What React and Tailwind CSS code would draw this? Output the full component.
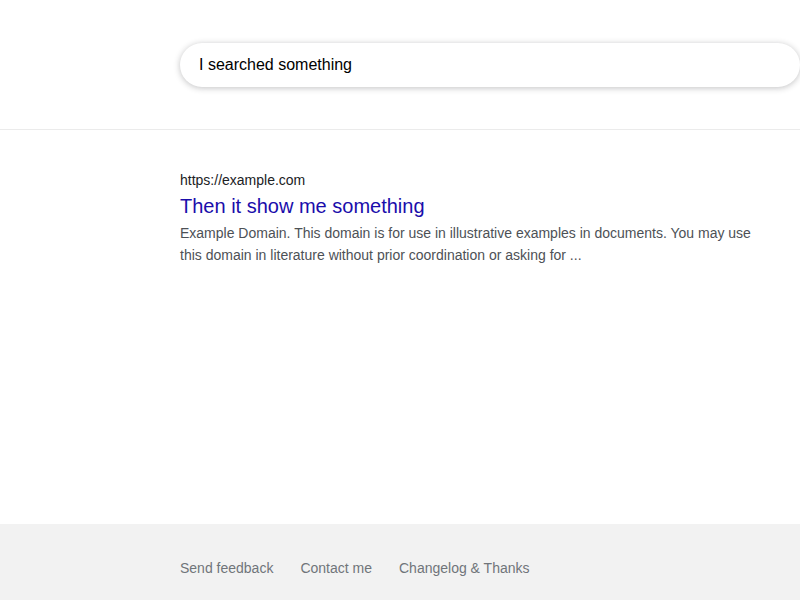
export default function App() {
  return (
    <div className="min-h-screen flex flex-col bg-white font-['Liberation_Sans',Arial,sans-serif]">
      {/* Header with search box */}
      <header className="pl-[180px] pt-[43px] pb-[42px] border-b border-[#ebebeb]">
        <div className="w-[620px] h-[44px] rounded-full bg-white shadow-[0_1px_6px_rgba(32,33,36,0.28)] flex items-center px-[19px]">
          <span className="text-[16px] text-black">I searched something</span>
        </div>
      </header>

      {/* Results */}
      <main className="flex-1 pl-[180px] pr-[40px] pt-[40px]">
        <div className="max-w-[580px]">
          <div className="text-[14px] leading-[20px] text-[#202124]">https://example.com</div>
          <a href="#" className="block text-[20px] leading-[32px] text-[#1a0dab]">
            Then it show me something
          </a>
          <p className="text-[14px] leading-[22px] text-[#4d5156]">
            Example Domain. This domain is for use in illustrative examples in documents. You may use
            this domain in literature without prior coordination or asking for ...
          </p>
        </div>
      </main>

      {/* Footer */}
      <footer className="h-[76px] bg-[#f2f2f2] pl-[180px] pt-[34px] flex gap-[27px] text-[14px] leading-[20px] text-[#70757a]">
        <a href="#">Send feedback</a>
        <a href="#">Contact me</a>
        <a href="#">Changelog &amp; Thanks</a>
      </footer>
    </div>
  );
}
